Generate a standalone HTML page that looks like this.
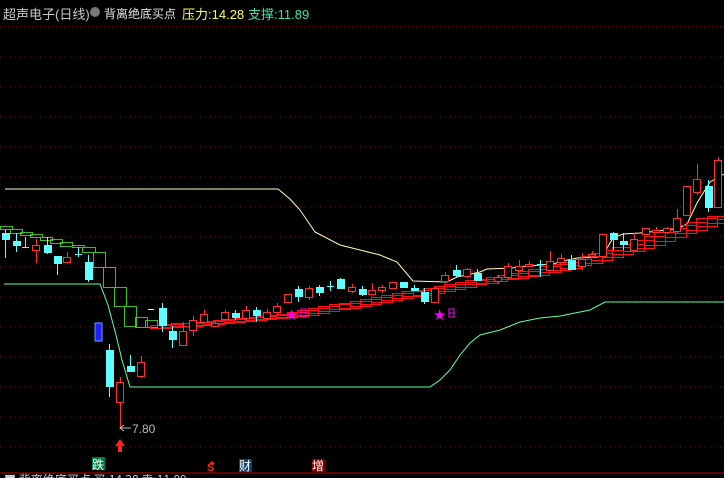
<!DOCTYPE html>
<html><head><meta charset="utf-8"><style>
html,body{margin:0;padding:0;background:#000;width:724px;height:478px;overflow:hidden}
.t{position:absolute;font-family:"Liberation Sans","Noto Sans CJK SC",sans-serif;font-size:13px;white-space:nowrap;top:4px}
</style></head><body>
<svg id="s" width="724" height="478" style="position:absolute;left:0;top:0" xmlns="http://www.w3.org/2000/svg">
<g id="grid"></g>
<polyline fill="none" stroke="#ffffc0" stroke-width="1" points="5,189 278,189 290,199 300,210 315,232 340,245 380,255 397,262 413,281 447,282 457,277 480,272 487,269 512,268 527,266 553,264 563,261 577,258 598,257 603,255 613,238 623,234 640,233 667,230 677,229 687,224 697,203 710,182 724,174"/>
<polyline fill="none" stroke="#60ffa0" stroke-width="1" points="4,284 100,284 108,305 116,335 122,360 130,387 430,387 440,380 450,370 460,355 470,343 480,335 500,330 520,322 540,318 560,316 590,310 605,302 724,302"/>
<g id="stairs" fill="none"></g>
<g id="candles"></g>
<line x1="0" y1="473" x2="724" y2="473" stroke="#c00000" stroke-width="1"/>
<line x1="0" y1="27" x2="724" y2="27" stroke="#c00000" stroke-width="1" stroke-dasharray="1,3"/>
<polygon points="120,439 115,446 118,446 118,452 122,452 122,446 125,446" fill="#ff2020"/>
<line x1="120" y1="428" x2="131" y2="428" stroke="#bbb"/>
<polyline points="124,425 120,428 124,431" fill="none" stroke="#bbb"/>
<text x="132" y="433" fill="#bbb" font-family="Liberation Sans" font-size="12">7.80</text>
<text x="285" y="320" fill="#ff00ff" font-size="15" font-family="DejaVu Sans">★</text>
<rect x="301" y="309" width="5" height="8" fill="none" stroke="#ff00ff"/><line x1="301" y1="313" x2="306" y2="313" stroke="#ff00ff"/>
<text x="433" y="320" fill="#ff00ff" font-size="15" font-family="DejaVu Sans">★</text>
<rect x="449" y="309" width="5" height="8" fill="none" stroke="#ff00ff"/><line x1="449" y1="313" x2="454" y2="313" stroke="#ff00ff"/>
<rect x="92" y="457" width="13" height="13" fill="#008040"/>
<text x="92" y="469" fill="#fff" font-size="12" font-family="Noto Sans CJK SC">跌</text>
<text x="207" y="471" fill="#ff2020" font-size="11" font-family="Liberation Sans" font-weight="bold">S</text>
<polygon points="212,461 209,464 215,464" fill="#ff2020"/>
<rect x="239" y="459" width="13" height="13" fill="#104070"/>
<text x="239" y="470" fill="#fff" font-size="12" font-family="Noto Sans CJK SC">财</text>
<rect x="312" y="459" width="13" height="13" fill="#800000"/>
<text x="312" y="470" fill="#fff" font-size="12" font-family="Noto Sans CJK SC">增</text>
<text x="4" y="484" fill="#ccc" font-size="12" font-family="Noto Sans CJK SC">■ 背离绝底买点 买:14.28 卖:11.89</text>
</svg>
<div class="t" style="left:3px;color:#c8c8c8">超声电子(日线)</div>
<div class="t" style="left:90px;top:7px;width:10px;height:10px;border-radius:50%;background:#777"></div>
<div class="t" style="left:104px;color:#e0e0e0;font-size:12px;top:5px">背离绝底买点</div>
<div class="t" style="left:182px;color:#ffff60">压力:<span>14.28</span></div>
<div class="t" style="left:248px;color:#40e0a0">支撑:<span>11.89</span></div>
<script>
var NS="http://www.w3.org/2000/svg";
function el(p,tag,a){var e=document.createElementNS(NS,tag);for(var k in a)e.setAttribute(k,a[k]);p.appendChild(e);return e;}
var g=document.getElementById("grid");
for(var y=57;y<=447;y+=30)el(g,"line",{x1:0,y1:y,x2:724,y2:y,stroke:"#a00000","stroke-dasharray":"1,4"});
var st=document.getElementById("stairs");
var gs=[[0,226,12,3],[10,229,12,4],[20,232,12,3],[30,234,12,3],[40,237,12,3],[50,239,12,4],[60,242,12,4],[72,245,12,2],[82,247,13,5],[93,252,12,15],[103,267,12,20],[114,287,12,19],[124,306,12,20],[135,317,12,10],[145,320,12,7]];
gs.forEach(function(r){el(st,"rect",{x:r[0]+.5,y:r[1]+.5,width:r[2],height:r[3],stroke:"#40c020"});});
var pts=[[150,327],[290,315],[420,292],[470,283],[520,275],[580,262],[640,245],[680,230],[724,216]];
function yat(x){for(var i=0;i<pts.length-1;i++){if(x<=pts[i+1][0]){var a=pts[i],b=pts[i+1];return a[1]+(b[1]-a[1])*(x-a[0])/(b[0]-a[0]);}}return 216;}
for(var x=150;x<724;x+=10.5){var y1=yat(x),y2=yat(x+21);el(st,"rect",{x:Math.round(x)+.5,y:Math.round(y2)+.5,width:21,height:Math.max(3,Math.round(y1-y2)+1),stroke:"#ff1010","stroke-width":1});}
var C=document.getElementById("candles");
var cd=[[5,233,240,230,258,"c"],[16,241,246,233,252,"c"],[25,247,247,237,247,"x"],[36,245,250,239,263,"r"],[47,245,253,237,254,"c"],[57,256,264,256,275,"c"],[67,257,262,252,262,"r"],[78,254,254,247,257,"x"],[88,262,280,255,282,"c"],[98,323,341,322,342,"b"],[109,350,387,344,397,"c"],[120,382,402,377,428,"r"],[130,366,372,355,372,"c"],[141,362,376,356,378,"r"],[162,308,326,303,332,"c"],[172,331,340,326,348,"c"],[183,331,345,322,345,"r"],[193,320,330,316,336,"r"],[204,314,322,310,322,"r"],[215,323,326,321,327,"r"],[225,312,319,310,319,"r"],[235,313,318,310,320,"c"],[246,310,318,306,320,"r"],[256,310,316,307,322,"c"],[267,312,318,309,320,"r"],[277,306,312,303,314,"r"],[288,294,302,294,302,"r"],[298,289,297,286,302,"c"],[309,288,297,286,300,"r"],[319,287,293,285,296,"c"],[330,286,286,281,291,"x"],[340,279,289,278,289,"c"],[352,287,291,284,293,"r"],[362,289,295,286,296,"c"],[372,290,294,283,295,"r"],[382,287,290,285,293,"r"],[393,282,288,282,288,"r"],[403,282,288,282,288,"c"],[414,288,291,285,291,"c"],[424,292,302,288,304,"c"],[435,288,302,286,302,"r"],[445,275,281,272,283,"r"],[456,270,276,265,277,"c"],[467,269,276,268,278,"r"],[477,273,281,269,281,"c"],[498,277,281,275,284,"r"],[508,266,277,263,279,"r"],[519,266,270,260,271,"r"],[529,264,266,261,267,"r"],[540,264,266,260,277,"x"],[550,261,270,251,271,"r"],[561,258,262,254,263,"r"],[571,260,270,255,270,"c"],[582,259,266,253,270,"r"],[592,254,256,251,258,"r"],[603,234,256,234,257,"r"],[613,233,240,232,250,"c"],[623,241,245,233,250,"c"],[634,239,250,233,250,"r"],[646,228,234,228,235,"r"],[656,230,232,227,233,"r"],[667,228,232,227,234,"r"],[677,218,231,209,233,"r"],[687,186,215,186,215,"r"],[697,179,192,164,195,"r"],[708,186,208,180,212,"c"],[718,160,207,157,208,"r"],[150,309,309,309,309,"y"]];
cd.forEach(function(c){var x=c[0],t=c[1],b=c[2],h=c[3],l=c[4],k=c[5];
if(k=="y"){el(C,"line",{x1:148,y1:309.5,x2:154,y2:309.5,stroke:"#ffff60"});return;}
var col=k=="r"?"#ff3030":(k=="b"?"#3030ff":"#60ffff");
el(C,"line",{x1:x+.5,y1:h,x2:x+.5,y2:l,stroke:col});
if(k=="x"){el(C,"line",{x1:x-3,y1:t+.5,x2:x+4,y2:t+.5,stroke:col});return;}
if(k=="r")el(C,"rect",{x:x-3.5,y:t+.5,width:7,height:Math.max(1,b-t),fill:"#000",stroke:col});
else if(k=="b"){el(C,"rect",{x:x-3,y:t,width:7,height:b-t,fill:"#2020ff",stroke:"#60a0ff"});}
else el(C,"rect",{x:x-3,y:t,width:8,height:Math.max(1,b-t),fill:col});
});
</script>
</body></html>
